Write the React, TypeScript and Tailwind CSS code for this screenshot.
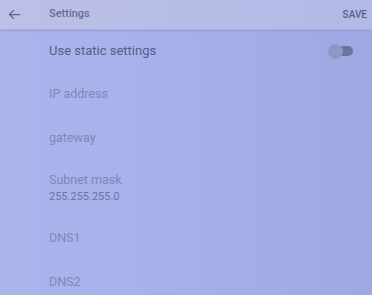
import React from 'react';

const Field: React.FC<{ label: string; value?: string; tall?: boolean }> = ({ label, value, tall }) => (
  <div className={`flex flex-col justify-center pl-[49px] ${tall ? 'h-[56px]' : 'h-[44px]'}`}>
    <span className="text-[12.5px] leading-none text-[#7f88b6]">{label}</span>
    {value && <span className="text-[11px] leading-none mt-[5px] text-[#6c74a2]">{value}</span>}
  </div>
);

const App: React.FC = () => {
  return (
    <div
      className="w-[372px] h-[295px] overflow-hidden bg-gradient-to-r from-[#abb5ec] via-[#a5b0eb] to-[#9ea9e3]"
      style={{ fontFamily: 'Roboto, "Noto Sans", sans-serif' }}
    >
      {/* Header */}
      <div className="flex items-center h-[30px] bg-gradient-to-r from-[#bcc0e8] to-[#b3b9e6] border-b border-[#a8aed8] shadow-[0_1px_2px_rgba(80,90,140,0.2)]">
        <svg className="ml-[7px] w-[15px] h-[15px]" viewBox="0 0 24 24" fill="none" stroke="#5d6488" strokeWidth="2">
          <path d="M21 12H4M11 5l-7 7 7 7" />
        </svg>
        <span className="ml-[27px] text-[11px] text-[#656c98] font-medium">Settings</span>
        <span className="ml-auto mr-[5px] text-[10px] font-medium text-[#5a6188]">SAVE</span>
      </div>

      {/* Static toggle */}
      <div className="flex items-center h-[42px] pl-[49px] pr-[19px]">
        <span className="text-[13px] text-[#575e86]">Use static settings</span>
        <div className="ml-auto relative w-[25px] h-[16px] flex items-center">
          <div className="absolute right-0 w-[17px] h-[10px] rounded-full bg-[#6c739c]" />
          <div className="absolute left-0 w-[15px] h-[15px] rounded-full bg-[#8f97c6]" />
        </div>
      </div>

      <div>
        <Field label="IP address" />
        <Field label="gateway" />
        <Field label="Subnet mask" value="255.255.255.0" tall />
        <Field label="DNS1" />
        <Field label="DNS2" />
      </div>
    </div>
  );
};

export default App;
